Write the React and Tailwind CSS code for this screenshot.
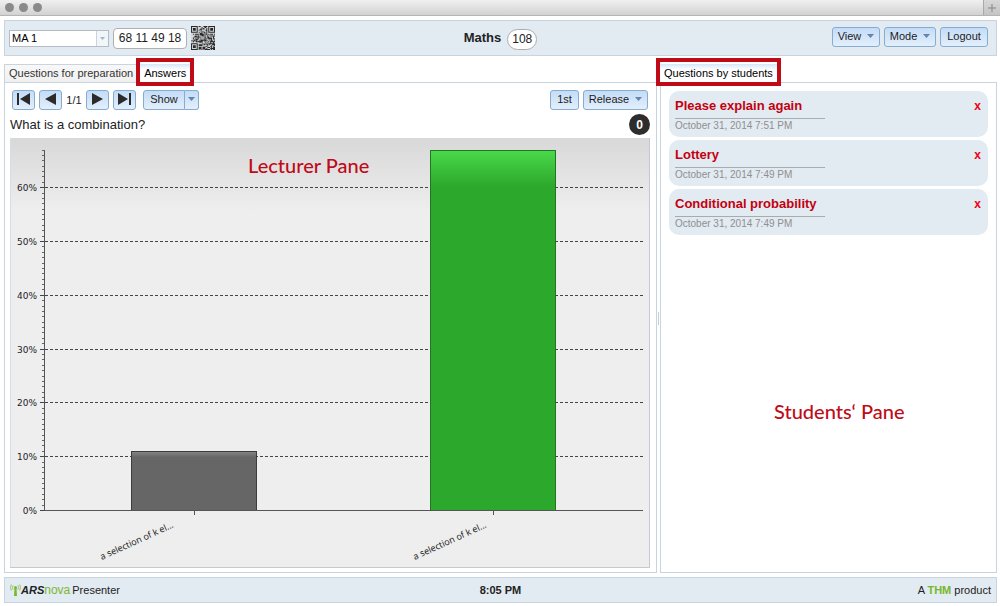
import React from "react";

const BUTTON =
  "flex h-5 items-center justify-center rounded-[3px] border border-[#86acd0] bg-linear-to-b from-[#c3dcf6] to-[#e3effc] pb-0.5 text-[11px] leading-4 text-[#1c1c1c]";

function Caret({ className = "" }) {
  return (
    <svg viewBox="0 0 7 4" className={`h-1 w-[7px] shrink-0 ${className}`} aria-hidden="true">
      <path d="M0 0H7L3.5 4Z" fill="#6484ab" />
    </svg>
  );
}

function TitleBar() {
  return (
    <div className="flex h-4 items-stretch justify-between border-b border-[#b4b4b4] bg-linear-to-b from-[#f0f0f0] to-[#d2d2d2]">
      <div className="flex items-center gap-[5px] pl-[5px]">
        <span className="size-[9px] rounded-full bg-[#8a8a8a]" />
        <span className="size-[9px] rounded-full bg-[#8a8a8a]" />
        <span className="size-[9px] rounded-full bg-[#8a8a8a]" />
      </div>
      <button
        type="button"
        aria-label="New tab"
        className="flex w-[17px] items-center justify-center border-l border-[#a9a9a9] bg-linear-to-b from-[#d8d8d8] to-[#c4c4c4]"
      >
        <svg viewBox="0 0 8 8" className="size-2" aria-hidden="true">
          <path d="M4 0V8M0 4H8" stroke="#858585" fill="none" />
        </svg>
      </button>
    </div>
  );
}

function qrPath() {
  const n = 25;
  let seed = 8161;
  let d = "";
  const finder = (x, y) => {
    const inBox = (a, b) => a >= 0 && a < 8 && b >= 0 && b < 8;
    const ring = (a, b) => {
      const m = Math.max(Math.abs(a - 3), Math.abs(b - 3));
      return m === 3 || m <= 1;
    };
    if (inBox(x, y)) return ring(x, y);
    if (inBox(n - 1 - x, y)) return ring(n - 1 - x, y);
    if (inBox(x, n - 1 - y)) return ring(x, n - 1 - y);
    return null;
  };
  for (let y = 0; y < n; y++) {
    for (let x = 0; x < n; x++) {
      seed = (seed * 1103515245 + 12345) % 2147483648;
      const f = finder(x, y);
      const on = f === null ? seed / 2147483648 > 0.45 : f;
      if (on) d += `M${x} ${y}h1v1h-1z`;
    }
  }
  return d;
}

function QrCode() {
  return (
    <svg viewBox="0 0 25 25" className="size-6 bg-[#d3d7da]" role="img" aria-label="QR code">
      <path d={qrPath()} fill="#2a2a2a" />
    </svg>
  );
}

function Header() {
  return (
    <header className="grid h-9 grid-cols-[1fr_auto_1fr] items-center border border-[#c9d4e1] bg-[#e2eaf2]">
      <div className="flex items-center gap-1 pl-1">
        <div className="relative flex">
          <select
            aria-label="Course"
            className="h-[17px] w-[100px] appearance-none border border-[#b5bcc7] bg-white pr-4 pl-0.5 text-[11px] leading-[15px] text-black"
          >
            <option>MA 1</option>
          </select>
          <span className="pointer-events-none absolute inset-y-px right-px flex w-3 items-center justify-center border-l border-[#ccd3dc] bg-[#f3f6f9]">
            <svg viewBox="0 0 5 3" className="h-[3px] w-[5px]" aria-hidden="true">
              <path d="M0 0H5L2.5 3Z" fill="#9cb8d3" />
            </svg>
          </span>
        </div>
        <span className="flex h-[21px] w-[74px] items-center justify-center rounded-sm border border-[#b0b0b0] bg-white text-xs text-[#1c1c1c]">
          68 11 49 18
        </span>
        <QrCode />
      </div>
      <div className="flex items-center gap-1.5">
        <h1 className="text-[13px] leading-4 font-bold text-[#222]">Maths</h1>
        <span className="mt-0.5 flex h-[21px] w-[30px] items-center justify-center rounded-full border border-[#adadad] bg-white text-xs text-[#222]">
          108
        </span>
      </div>
      <div className="flex items-center justify-end gap-1 pr-2 pb-0.5">
        <button type="button" className={`${BUTTON} w-12 gap-1.5`}>
          View <Caret />
        </button>
        <button type="button" className={`${BUTTON} w-[52px] gap-1.5`}>
          Mode <Caret />
        </button>
        <button type="button" className={`${BUTTON} w-12`}>
          Logout
        </button>
      </div>
    </header>
  );
}

function ActiveTab({ children }) {
  return (
    <button
      type="button"
      role="tab"
      aria-selected="true"
      className="relative h-[19px] bg-linear-to-b from-[#d5e7fa] to-white to-30% px-1 pb-0.5 text-[11px] leading-4 text-black"
    >
      {children}
      <span className="pointer-events-none absolute -inset-x-1 -top-1.5 -bottom-[3px] border-4 border-[#bf0a18]" />
    </button>
  );
}

const UNIT = 5.38;
const BASE = 372;
const yOf = (percent) => Math.round(BASE - percent * UNIT) + 0.5;

function Bar({ x, width, percent, fill, stroke }) {
  const top = yOf(percent);
  return (
    <rect x={x + 0.5} y={top} width={width} height={BASE + 0.5 - top} fill={fill} stroke={stroke} />
  );
}

function Chart() {
  const minor = Array.from({ length: 68 }, (_, i) => i);
  const major = [0, 10, 20, 30, 40, 50, 60];
  return (
    <svg
      viewBox="0 0 640 430"
      className="mt-[3px] block w-full text-[9px]"
      role="img"
      aria-label="Distribution of answers"
    >
      <defs>
        <linearGradient id="back" x1="0" y1="0" x2="0" y2="1">
          <stop offset="0" stopColor="#d8d8d8" />
          <stop offset="0.17" stopColor="#eeeeee" />
        </linearGradient>
        <linearGradient id="green" x1="0" y1="0" x2="0" y2="1">
          <stop offset="0" stopColor="#4ad94a" />
          <stop offset="0.1" stopColor="#2ca82c" />
        </linearGradient>
        <linearGradient id="gray" x1="0" y1="0" x2="0" y2="1">
          <stop offset="0" stopColor="#858585" />
          <stop offset="0.1" stopColor="#666666" />
        </linearGradient>
      </defs>
      <rect width="640" height="430" fill="url(#back)" />
      <path d="M0.5 0V430" stroke="#d9dce1" />
      <path d="M0 429.5H639.5V0" stroke="#c3c8d2" fill="none" />
      {major.slice(1).map((p) => (
        <path key={p} d={`M35 ${yOf(p)}H633`} stroke="#444" strokeDasharray="3 2" />
      ))}
      {minor.map((p) => (
        <path key={p} d={`M32 ${yOf(p)}H35`} stroke="#666" />
      ))}
      {major.map((p) => (
        <g key={p} className="font-['DejaVu_Sans',sans-serif]">
          <path d={`M30 ${yOf(p)}H35`} stroke="#444" />
          <text x="27" y={yOf(p) + 3} textAnchor="end" fill="#222">
            {p}%
          </text>
        </g>
      ))}
      <Bar x={121} width={125} percent={11} fill="url(#gray)" stroke="#3c3c3c" />
      <Bar x={420} width={125} percent={67} fill="url(#green)" stroke="#227522" />
      <path d="M34.5 12V373M34 372.5H633M184.5 373V377M483.5 373V377" stroke="#555" fill="none" />
      {[164, 477].map((x) => (
        <text
          key={x}
          transform={`translate(${x} 389) rotate(-24.5)`}
          textAnchor="end"
          fill="#111"
          className="font-['Open_Sans',sans-serif] font-medium"
        >
          a selection of k el...
        </text>
      ))}
    </svg>
  );
}

const NAV = {
  first: "M1 0H3V12H1ZM14 0V12L4 6Z",
  previous: "M13 0V12L2 6Z",
  next: "M2 0V12L13 6Z",
  last: "M12 0H14V12H12ZM1 0V12L11 6Z",
};

function NavButton({ label, icon }) {
  return (
    <button type="button" aria-label={label} className={`${BUTTON} w-[23px]`}>
      <svg viewBox="0 0 15 12" className="h-3 w-[15px]" aria-hidden="true">
        <path d={NAV[icon]} fill="#2b2b2b" />
      </svg>
    </button>
  );
}

function LecturerPane() {
  return (
    <section className="flex flex-col">
      <div role="tablist" className="flex items-start gap-[3px]">
        <button
          type="button"
          role="tab"
          aria-selected="false"
          className="h-[18px] border-t border-l border-[#c9d4e1] bg-linear-to-b from-[#f8f8f8] to-[#f0f0f0] px-1 pb-0.5 text-[11px] leading-4 text-[#333]"
        >
          Questions for preparation
        </button>
        <div className="relative z-10 -mb-px flex">
          <ActiveTab>Answers</ActiveTab>
        </div>
      </div>
      <div className="flex-1 border border-[#c9d4e1] pt-[7px] pr-1.5 pb-1 pl-[5px]">
        <div className="flex items-center justify-between">
          <div className="flex items-center gap-1 pl-0.5">
            <NavButton label="First question" icon="first" />
            <NavButton label="Previous question" icon="previous" />
            <span className="w-4 text-center text-[11px] leading-4 whitespace-nowrap text-[#222]">1/1</span>
            <NavButton label="Next question" icon="next" />
            <NavButton label="Last question" icon="last" />
            <div className="ml-[3px] flex">
              <button type="button" className={`${BUTTON} w-[42px] rounded-r-none`}>
                Show
              </button>
              <button
                type="button"
                aria-label="Show options"
                className={`${BUTTON} w-[14px] rounded-l-none border-l-0`}
              >
                <Caret />
              </button>
            </div>
          </div>
          <div className="flex gap-1 pr-0.5">
            <button type="button" className={`${BUTTON} w-[29px]`}>
              1st
            </button>
            <button type="button" className={`${BUTTON} w-[65px] gap-1.5`}>
              Release <Caret />
            </button>
          </div>
        </div>
        <div className="mt-1 flex h-[21px] items-center justify-between">
          <h2 className="text-[13px] leading-5 text-[#222]">What is a combination?</h2>
          <span className="flex size-[21px] items-center justify-center rounded-full bg-[#2d2d2d] text-xs font-bold text-white">
            0
          </span>
        </div>
        <div className="relative">
          <Chart />
          <span className="absolute top-[13px] left-[238px] font-['Lato',sans-serif] text-xl leading-7 font-medium whitespace-nowrap text-[#bf0a18]">
            Lecturer Pane
          </span>
        </div>
      </div>
    </section>
  );
}

const QUESTIONS = [
  { title: "Please explain again", date: "October 31, 2014 7:51 PM" },
  { title: "Lottery", date: "October 31, 2014 7:49 PM" },
  { title: "Conditional probability", date: "October 31, 2014 7:49 PM" },
];

function StudentsPane() {
  return (
    <section className="flex flex-col">
      <div role="tablist" className="relative z-10 -mb-px flex">
        <ActiveTab>Questions by students</ActiveTab>
      </div>
      <div className="relative flex-1 border border-[#c9d4e1] p-2">
        <ul className="flex flex-col gap-[3px]">
          {QUESTIONS.map((q) => (
            <li
              key={q.title}
              className="flex h-[46px] items-start justify-between rounded-[10px] bg-[#e2eaf2] pt-1.5 pr-[7px] pl-1.5"
            >
              <div className="w-[150px]">
                <h3 className="border-b border-[#a9abad] pb-[3px] text-[13px] leading-[18px] font-bold whitespace-nowrap text-[#c4000f]">
                  {q.title}
                </h3>
                <p className="pt-px text-[10px] leading-3 text-[#8f8f8f]">{q.date}</p>
              </div>
              <button
                type="button"
                aria-label={`Delete ${q.title}`}
                className="text-xs leading-[18px] font-bold text-[#f00010]"
              >
                x
              </button>
            </li>
          ))}
        </ul>
        <span className="absolute top-[314px] left-[113px] font-['Lato',sans-serif] text-xl leading-7 font-medium whitespace-nowrap text-[#bf0a18]">
          Students‘ Pane
        </span>
      </div>
    </section>
  );
}

function Footer() {
  return (
    <footer className="grid h-[26px] grid-cols-[1fr_auto_1fr] items-center border border-[#c9d4e1] bg-[#e2eaf2] px-[5px] text-[11px] leading-4 text-[#222]">
      <div className="flex items-center">
        <svg viewBox="0 0 11 12" className="h-3 w-[11px]" aria-hidden="true">
          <circle cx="5.5" cy="3.5" r="1.5" fill="#7db72f" />
          <path d="M4.5 4H6.5L7 12H4Z" fill="#7db72f" />
          <path
            d="M3 1.5Q2 3.5 3 5.5M8 1.5Q9 3.5 8 5.5M1.3 0.5Q-0.3 3.5 1.3 6.5M9.7 0.5Q11.3 3.5 9.7 6.5"
            fill="none"
            stroke="#8cc152"
            strokeWidth="0.9"
          />
        </svg>
        <b className="italic">ARS</b>
        <span className="mr-0.5 text-xs leading-4 text-[#7db72f]">nova</span>
        Presenter
      </div>
      <time className="font-bold">8:05 PM</time>
      <div className="text-right">
        A <b className="text-[#76b729]">THM</b> product
      </div>
    </footer>
  );
}

export default function App() {
  return (
    <div className="flex min-h-screen flex-col bg-white font-['Liberation_Sans',Arial,sans-serif]">
      <TitleBar />
      <div className="flex flex-1 flex-col pt-1 pr-[3px] pb-[3px] pl-1">
        <Header />
        <main className="mt-2 mb-1 grid flex-1 grid-cols-[653fr_3px_337fr]">
          <LecturerPane />
          <div className="flex items-center justify-center" role="separator" aria-orientation="vertical">
            <span className="h-[13px] w-px bg-[#c3cfdd]" />
          </div>
          <StudentsPane />
        </main>
        <Footer />
      </div>
    </div>
  );
}
